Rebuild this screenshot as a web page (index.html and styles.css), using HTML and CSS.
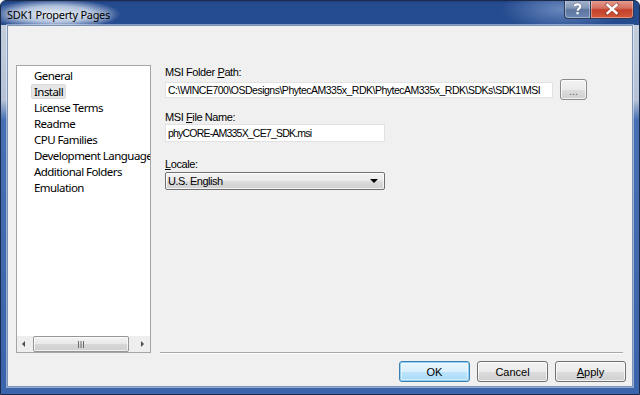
FILE: index.html
```html
<!DOCTYPE html>
<html>
<head>
<meta charset="utf-8">
<title>SDK1 Property Pages</title>
<link rel="stylesheet" href="styles.css">
</head>
<body>
<div class="window">
  <div class="titlebar">
    <div class="title">SDK1 Property Pages</div>
    <div class="caption-buttons">
      <div class="cap help">
        <svg width="26" height="18" viewBox="0 0 26 18"><path d="M10 6.2 C10 3.6 16 3.3 16 6.4 C16 8.6 13 8.6 13 10.8" fill="none" stroke="#2a3550" stroke-width="3.6" opacity=".35"/><path d="M10 6.2 C10 3.6 16 3.3 16 6.4 C16 8.6 13 8.6 13 10.8" fill="none" stroke="#fff" stroke-width="2.2" stroke-linecap="butt"/><rect x="11.9" y="12.2" width="2.3" height="2.3" fill="#fff"/></svg>
      </div>
      <div class="cap close">
        <svg width="42" height="18" viewBox="0 0 42 18"><path d="M16 4.5 L26 13.5 M26 4.5 L16 13.5" stroke="#3a1a16" stroke-width="3.6" stroke-linecap="square" opacity=".35"/><path d="M16.5 5 L25.5 13 M25.5 5 L16.5 13" stroke="#fff" stroke-width="2.4" stroke-linecap="square"/></svg>
      </div>
    </div>
  </div>
  <div class="frame">
    <div class="client">
      <div class="main">
        <div class="listbox">
          <ul class="items">
            <li><span>General</span></li>
            <li class="sel"><span>Install</span></li>
            <li><span>License Terms</span></li>
            <li><span>Readme</span></li>
            <li><span>CPU Families</span></li>
            <li><span>Development Language</span></li>
            <li><span>Additional Folders</span></li>
            <li><span>Emulation</span></li>
          </ul>
          <div class="hscroll">
            <div class="sarrow">
              <svg width="16" height="16" viewBox="0 0 16 16"><path d="M8 5 L5 8 L8 11 Z" fill="#4d4d4d"/></svg>
            </div>
            <div class="track">
              <div class="thumb">
                <svg width="8" height="7" viewBox="0 0 8 7"><path d="M1.5 0V7M4 0V7M6.5 0V7" stroke="#6a6a6a" stroke-width="1"/></svg>
              </div>
            </div>
            <div class="sarrow">
              <svg width="16" height="16" viewBox="0 0 16 16"><path d="M7 5 L10 8 L7 11 Z" fill="#4d4d4d"/></svg>
            </div>
          </div>
        </div>
        <div class="panel">
          <div class="label">MSI Folder <u>P</u>ath:</div>
          <div class="row">
            <div class="textbox path">C:\WINCE700\OSDesigns\PhytecAM335x_RDK\PhytecAM335x_RDK\SDKs\SDK1\MSI</div>
            <button class="btn browse">...</button>
          </div>
          <div class="label gap1">MSI <u>F</u>ile Name:</div>
          <div class="textbox file">phyCORE-AM335X_CE7_SDK.msi</div>
          <div class="label gap2"><u>L</u>ocale:</div>
          <div class="combo">
            <span>U.S. English</span>
            <svg width="9" height="5" viewBox="0 0 9 5"><path d="M0 0H8L4 4Z" fill="#000"/></svg>
          </div>
        </div>
      </div>
      <div class="buttons">
        <button class="btn default">OK</button>
        <button class="btn">Cancel</button>
        <button class="btn"><u>A</u>pply</button>
      </div>
    </div>
  </div>
</div>
</body>
</html>
```

FILE: styles.css
```css
* { box-sizing: border-box; }
html, body {
  margin: 0;
  padding: 0;
  width: 640px;
  height: 395px;
  overflow: hidden;
  background: #ffffff;
}
.window {
  width: 640px;
  height: 395px;
  display: flex;
  flex-direction: column;
  border: 1px solid #1a2a48;
  border-radius: 6px 6px 0 0;
  overflow: hidden;
  background: #2b5096;
}
.titlebar {
  height: 24px;
  flex: none;
  display: flex;
  justify-content: space-between;
  align-items: flex-start;
  background:
    radial-gradient(ellipse 66px 15px at 54px 13px, rgba(236,242,250,0.95) 0%, rgba(220,230,244,0.75) 55%, rgba(200,215,238,0) 100%),
    radial-gradient(ellipse 60px 22px at 560px 8px, rgba(120,150,200,0.8) 0%, rgba(90,125,185,0) 100%),
    linear-gradient(to bottom, #1f4182 0px, #254b8f 3px, #264c90 100%);
}
.title {
  font-family: "Noto Sans", "Open Sans", sans-serif;
  font-size: 11px;
  line-height: 16px;
  color: #000;
  padding: 6px 0 0 6px;
  text-shadow: 0 0 6px rgba(255,255,255,0.9);
  letter-spacing: -0.3px;
}
.caption-buttons {
  display: flex;
  margin-right: 5px;
  margin-top: -1px;
}
.cap {
  height: 19px;
  border: 1px solid #2c3b57;
  border-top: none;
  display: flex;
}
.help {
  width: 27px;
  border-radius: 0 0 0 4px;
  background: linear-gradient(to bottom, #a8b7cf 0%, #8196b7 45%, #5d76a0 55%, #6c87b4 100%);
  box-shadow: inset 0 0 0 1px rgba(255,255,255,0.35);
}
.close {
  width: 43px;
  border-left: none;
  border-radius: 0 0 4px 0;
  background: linear-gradient(to bottom, #e8a196 0%, #d4705f 45%, #c2402c 55%, #d25a3c 100%);
  box-shadow: inset 0 0 0 1px rgba(255,255,255,0.35);
}
.frame {
  flex: 1;
  display: flex;
  padding: 0 6px 7px 6px;
  background: linear-gradient(to bottom, #c3cddb 0px, #b5c2d6 75px, #4670b4 95px, #3a64ab 100%);
}
.client {
  flex: 1;
  display: flex;
  flex-direction: column;
  background: #f0f0f0;
  border: 1px solid #7c93b8;
  box-shadow: 0 0 0 1px rgba(255,255,255,0.45);
  padding: 39px 0 0 8px;
}
.main {
  display: flex;
  height: 288px;
  margin-right: 9px;
}
.listbox {
  width: 135px;
  height: 288px;
  background: #fff;
  border: 1px solid #a6a6a6;
  display: flex;
  flex-direction: column;
}
.items {
  list-style: none;
  margin: 0;
  padding: 1px 0 0 14px;
  flex: 1;
  overflow: hidden;
  font-family: "Noto Sans", "Open Sans", sans-serif;
  font-size: 11.5px;
  letter-spacing: -0.55px;
  color: #000;
}
.items li {
  height: 16px;
  display: flex;
  align-items: center;
  white-space: nowrap;
}
.items li span {
  display: block;
  line-height: 13px;
  padding: 0 2px;
  border: 1px solid transparent;
  border-radius: 2px;
}
.items li.sel span {
  background: #e6e6e6;
  border-color: #dadada;
}
.hscroll {
  height: 16px;
  flex: none;
  display: flex;
  background: #eeeeee;
}
.sarrow {
  width: 16px;
  height: 16px;
  flex: none;
}
.sarrow svg { display: block; }
.track {
  flex: 1;
  display: flex;
  padding-right: 5px;
}
.thumb {
  width: 96px;
  height: 16px;
  border: 1px solid #979797;
  border-radius: 2px;
  background: linear-gradient(to bottom, #f3f3f3 0%, #e8e8e8 50%, #d7d7d7 51%, #cfcfcf 100%);
  box-shadow: inset 0 0 0 1px rgba(255,255,255,0.7);
  display: flex;
  align-items: center;
  justify-content: center;
}
.thumb svg { display: block; }
.panel {
  flex: 1;
  margin-left: 9px;
  border-bottom: 1px solid #a8a8a8;
  box-shadow: 0 1px 0 #ffffff;
  padding-left: 5px;
  font-family: "Liberation Sans", Arial, sans-serif;
  font-size: 11px;
  color: #000;
}
.label {
  line-height: 14px;
  height: 14px;
  letter-spacing: -0.4px;
}
.label u { text-decoration-thickness: 1px; text-underline-offset: 1px; }
.gap1 { margin-top: 10px; }
.gap2 { margin-top: 15px; }
.row {
  display: flex;
  align-items: center;
  height: 21px;
}
.textbox {
  background: #fff;
  border: 1px solid #e2e2e2;
  padding-left: 2px;
  white-space: nowrap;
  overflow: hidden;
  display: flex;
  align-items: center;
  font-size: 10.5px;
}
.path {
  width: 388px;
  height: 16px;
  letter-spacing: -0.5px;
}
.file {
  width: 220px;
  height: 18px;
  letter-spacing: -0.8px;
}
.btn {
  font-family: "Liberation Sans", Arial, sans-serif;
  font-size: 11px;
  color: #000;
  width: 71px;
  height: 21px;
  padding: 0;
  border: 1px solid #707070;
  border-radius: 3px;
  background: linear-gradient(to bottom, #f2f2f2 0%, #ebebeb 50%, #dddddd 51%, #cfcfcf 100%);
  box-shadow: inset 0 0 0 1px rgba(255,255,255,0.75);
}
.btn u { text-decoration-thickness: 1px; text-underline-offset: 1px; }
.browse {
  width: 27px;
  height: 21px;
  margin-left: 7px;
  color: #6d6d6d;
  border-color: #8a8a8a;
  line-height: 14px;
  padding-top: 2px;
}
.combo {
  margin-top: 1px;
  width: 220px;
  height: 18px;
  border: 1px solid #707070;
  border-radius: 2px;
  background: linear-gradient(to bottom, #f2f2f2 0%, #ebebeb 50%, #dddddd 51%, #cfcfcf 100%);
  box-shadow: inset 0 0 0 1px rgba(255,255,255,0.75);
  display: flex;
  align-items: center;
  justify-content: space-between;
  padding: 0 5px 0 2px;
  letter-spacing: -0.5px;
}
.combo svg { display: block; margin-top: 1px; }
.buttons {
  display: flex;
  justify-content: flex-end;
  gap: 7px;
  margin-top: 8px;
  margin-right: 6px;
}
.default {
  border-color: #3c7fb1;
  background: linear-gradient(to bottom, #eaf6fd 0%, #d9f0fc 50%, #bee6fd 51%, #a7d9f5 100%);
  box-shadow: inset 0 0 0 1px #8fd0f2, inset 0 0 0 2px rgba(255,255,255,0.5);
}
```
